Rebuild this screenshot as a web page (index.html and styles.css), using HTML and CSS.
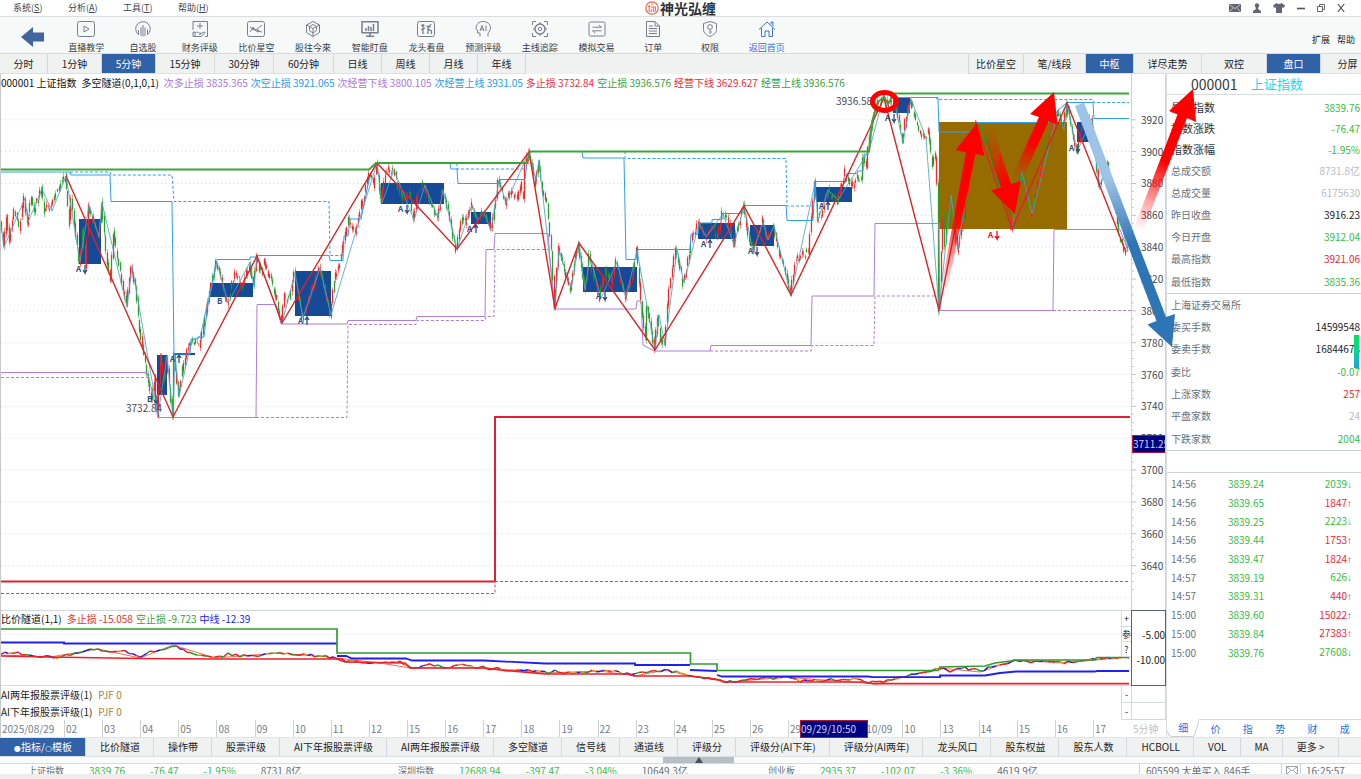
FILE: index.html
```html
<!DOCTYPE html>
<html lang="zh-CN">
<head>
<meta charset="utf-8">
<title>神光弘缠</title>
<link rel="stylesheet" href="styles.css">
</head>
<body>
<div class="app">
  <header class="menubar">
    <nav class="menus">
      <button>系统(<u>S</u>)</button><button>分析(<u>A</u>)</button><button>工具(<u>T</u>)</button><button>帮助(<u>H</u>)</button>
    </nav>
    <div class="brand">
      <svg width="14" height="14" viewBox="0 0 14 14" fill="none" stroke="#f2654e"><circle cx="7" cy="7" r="6.2" stroke-width="1.2"/><path d="M3.2 5.5h2M4.2 4v7M7 2.5v2M6 6h4.500v3l-1 2M6.200 8v3M8.300 6v5"/></svg>
      <h1>神光弘缠</h1>
    </div>
    <div class="window-tools">
      <button aria-label="邮件"><svg width="12" height="8" viewBox="0 0 12 8"><rect width="12" height="8" rx="1" fill="#5f6872"/><path d="M1 1l5 3.6L11 1M1 7l3-2.6M11 7L8 4.4" stroke="#dfe3e7" fill="none" stroke-width=".8"/></svg></button>
      <button aria-label="用户"><svg width="10" height="10" viewBox="0 0 10 10"><circle cx="5" cy="2.4" r="2.2" fill="#5f6872"/><path d="M1 10V8l3-2h2l3 2v2zM3.8 4h2.4v3H3.8z" fill="#5f6872"/></svg></button>
      <button aria-label="皮肤"><svg width="12" height="10" viewBox="0 0 12 10"><path d="M3.5 0Q6 2 8.500 0L12 2.500 10.600 5 9 4.300V10H3V4.300L1.400 5 0 2.500z" fill="#5f6872"/></svg></button>
      <button aria-label="最小化" class="win"><svg width="8" height="10" viewBox="0 0 8 10"><path d="M0 5.500h8" stroke="#555" stroke-width="1.600"/></svg></button>
      <button aria-label="还原" class="win"><svg width="8" height="8" viewBox="0 0 8 8"><path d="M.5 2.500h5v5h-5zM2.500 2.500v-2h5v5h-2" fill="none" stroke="#666"/></svg></button>
      <button aria-label="关闭" class="win"><svg width="8" height="8" viewBox="0 0 8 8"><path d="M.8 0l6.400 8M7.200 0L.8 8" stroke="#555" stroke-width="1.200"/></svg></button>
    </div>
  </header>

  <div class="toolbar">
    <button class="back" aria-label="返回"><svg width="23" height="20" viewBox="0 0 23 20"><path d="M0 10L12 0v5.500h11v9H12V20z" fill="#41659f"/></svg></button>
    <nav class="tools">
      <button><svg viewBox="0 0 18 16"><rect x=".5" y=".5" width="17" height="15" rx="2"/><path d="M7 5l5 3-5 3z"/></svg>直播教学</button>
      <button><svg viewBox="0 0 18 16"><path d="M4.500 13.700A7.300 7.300 0 1 1 13.500 13.700" /><path d="M4.500 13.500V9M7 15V6.500M9 15.500V4M11 15V6.500M13.500 13.500V8.500"/></svg>自选股</button>
      <button><svg viewBox="0 0 18 16"><path d="M2 9V.5h14.500v15H14M9 2v6M6 5h6M2 11v4.500h2V11zM4 12c2-2 3 0 5 0s1 1.500-1 1.500M9 13l4-2c1.500 0 1 1.200 0 2l-3 2.500H4"/></svg>财务评级</button>
      <button><svg viewBox="0 0 18 16"><rect x=".5" y=".5" width="17" height="15" rx="2"/><path d="M3 11l3-4 3 2 6-5M3 6l4 3 3 1 5 1"/><circle cx="6" cy="7.500" r="1"/><circle cx="11" cy="10" r="1"/></svg>比价星空</button>
      <button><svg viewBox="0 0 18 16"><path d="M9 .5l6.500 3.500v7.500L9 15.500l-6.500-4V4zM9 7.500v8M9 7.500L2.500 4M9 7.500L15.500 4M9 3.500l3.500 2v4L9 12 5.500 9.500v-4z"/></svg>股往今來</button>
      <button><svg viewBox="0 0 18 16"><path d="M1 .7h16v11H1zM5 15.300h8M9 12v3" stroke-width="1.500"/><path d="M5 10V7M7.500 10V5M10 10V6M12.500 10V3" stroke-width="1.500"/></svg>智能盯盘</button>
      <button><svg viewBox="0 0 18 16"><rect x=".5" y=".5" width="17" height="15" rx="2"/><path d="M4 4.500h3.500M6 3v10M4 9l4-2M14 3l-3 4.500V13M11 8l3.500 2v3M9.500 5.500h4" stroke-width="1.300"/></svg>龙头看盘</button>
      <button><svg viewBox="0 0 18 16"><path d="M6 15.500V12H3.500V9L2 8C2 3 5 .5 9 .5S16.500 3 16.500 7c0 2.500-2 4-2.500 5.500v3M6 10l2-5.500L10 10M6.800 8.200h2.600M12 4.500V10"/></svg>预测评级</button>
      <button><svg viewBox="0 0 18 16"><path d="M1.500 4V.5H5M13 .5h3.500V4M1.500 12v3.500H5M13 15.500h3.500V12M9 1v2M9 13v2M2 8h2M14 8h2"/><circle cx="9" cy="8" r="5" stroke-width="1.400"/><circle cx="9" cy="8" r="1.700"/></svg>主线追踪</button>
      <button><svg viewBox="0 0 18 16"><rect x="1" y="1" width="16" height="14" rx="1.500"/><path d="M4.500 6.200h9L10.700 4M13.500 9.800h-9L7.300 12"/></svg>模拟交易</button>
      <button><svg viewBox="0 0 18 16"><path d="M2.500.5h8.500l4.500 4.500v10.500h-13zM11 .5V5h4.500M5 5h4M5 7.500h8M5 10h8M5 12.500h8"/></svg>订单</button>
      <button><svg viewBox="0 0 18 16"><path d="M9 .5l6.500 2v6c0 3.500-3 5.500-6.500 7-3.500-1.500-6.500-3.500-6.500-7v-6zM9 8.500V13M9 11h1.800"/><circle cx="9" cy="6" r="2.400"/></svg>权限</button>
      <button class="home"><svg viewBox="0 0 18 16"><path d="M1 8.500L9 1l8 7.500M3.500 7v8.500H7V10h4v5.500h3.500V7M13 3.500V1h2v4.500"/></svg>返回首页</button>
    </nav>
    <div class="tool-links"><button>扩展</button><button>帮助</button></div>
  </div>

  <div class="periods">
    <nav class="tabs spans">
      <button>分时</button><button>1分钟</button><button class="active">5分钟</button><button>15分钟</button><button>30分钟</button><button>60分钟</button><button>日线</button><button>周线</button><button>月线</button><button>年线</button>
    </nav>
    <nav class="tabs modes">
      <button>比价星空</button><button>笔/线段</button><button class="active">中枢</button><button>详尽走势</button><button>双控</button><button class="active">盘口</button><button>分屏</button>
    </nav>
  </div>

  <main class="workspace">
    <div class="legend chart-legend">
      <b>000001 上证指数</b><b>多空隧道(0,1,0,1)</b>
      <span class="purple">次多止损 3835.365</span><span class="sky">次空止损 3921.065</span><span class="purple">次经营下线 3800.105</span><span class="sky">次经营上线 3931.05</span><span class="red">多止损 3732.84</span><span class="green">空止损 3936.576</span><span class="red">经营下线 3629.627</span><span class="green">经营上线 3936.576</span>
    </div>
    <svg class="price" id="price"></svg>
    <div class="axis">
      <svg id="axis"></svg>
      <output class="cursor-price">3711.25</output>
    </div>

    <section class="sub">
      <div class="legend"><b>比价隧道(1,1)</b><span class="red">多止损 -15.058</span><span class="green">空止损 -9.723</span><span class="blue">中线 -12.39</span></div>
      <svg id="tunnel"></svg>
      <div class="sub-buttons"><button>+</button><button>参</button><button>?</button></div>
    </section>
    <div class="sub-axis"><span>-5.00</span><span>-10.00</span></div>

    <section class="rating"><b>AI两年报股票评级(1)</b><span>PJF 0</span><button>-</button></section>
    <div class="rating-axis"></div>
    <section class="rating"><b>AI下年报股票评级(1)</b><span>PJF 0</span><button>-</button></section>
    <div class="rating-axis"></div>

    <div class="dates">
      <span>2025/08/29</span><span>02</span><span>03</span><span>04</span><span>05</span><span>08</span><span>09</span><span>10</span><span>11</span><span>12</span><span>15</span><span>16</span><span>17</span><span>18</span><span>19</span><span>22</span><span>23</span><span>24</span><span>25</span><span>26</span><span class="cursor">29<output>09/29/10:50</output></span><span></span><span>10/09</span><span>10</span><span>13</span><span>14</span><span>15</span><span>16</span><span>17</span>
    </div>
    <div class="period-note">5分钟</div>

    <aside class="quote">
      <h2><span>000001</span>上证指数</h2>
      <table class="major">
        <tr><th>最新指数</th><td class="up">3839.76</td></tr>
        <tr><th>指数涨跌</th><td class="up">-76.47</td></tr>
        <tr><th>指数涨幅</th><td class="up">-1.95%</td></tr>
      </table>
      <table class="daily">
        <tr><th>总成交额</th><td class="mute">8731.8亿</td></tr>
        <tr><th>总成交量</th><td class="mute">6175630</td></tr>
        <tr><th>昨日收盘</th><td>3916.23</td></tr>
        <tr><th>今日开盘</th><td class="up">3912.04</td></tr>
        <tr><th>最高指数</th><td class="down">3921.06</td></tr>
        <tr><th>最低指数</th><td class="up">3835.36</td></tr>
      </table>
      <table class="market">
        <tr><th colspan="2">上海证券交易所</th></tr>
        <tr><th>委买手数</th><td>14599548</td></tr>
        <tr><th>委卖手数</th><td>16844678</td></tr>
        <tr><th>委比</th><td class="up">-0.07</td></tr>
        <tr><th>上涨家数</th><td class="down">257</td></tr>
        <tr><th>平盘家数</th><td class="mute">24</td></tr>
        <tr><th>下跌家数</th><td class="up">2004</td></tr>
      </table>
      <div class="spacer"></div>
      <table class="ticks">
        <tr><th>14:56</th><td>3839.24</td><td class="up">2039<i>↓</i></td></tr>
        <tr><th>14:56</th><td>3839.65</td><td class="down">1847<i>↑</i></td></tr>
        <tr><th>14:56</th><td>3839.25</td><td class="up">2223<i>↓</i></td></tr>
        <tr><th>14:56</th><td>3839.44</td><td class="down">1753<i>↑</i></td></tr>
        <tr><th>14:56</th><td>3839.47</td><td class="down">1824<i>↑</i></td></tr>
        <tr><th>14:57</th><td>3839.19</td><td class="up">626<i>↓</i></td></tr>
        <tr><th>14:57</th><td>3839.31</td><td class="down">440<i>↑</i></td></tr>
        <tr><th>15:00</th><td>3839.60</td><td class="down">15022<i>↑</i></td></tr>
        <tr><th>15:00</th><td>3839.84</td><td class="down">27383<i>↑</i></td></tr>
        <tr><th>15:00</th><td>3839.76</td><td class="up">27608<i>↓</i></td></tr>
      </table>
      <nav class="quote-tabs"><button class="on"><svg viewBox="0 0 34 17" preserveAspectRatio="none"><path d="M0 0h34l-5 15q-.5 1.500-2 1.500H5Q2.500 16.500 2 14z" fill="#fff"/><path d="M0 11l2 4q1 1.500 3 1.500h22q1.500 0 2-1.500L34 .5" fill="none" stroke="#c8d0d3"/></svg>细</button><button>价</button><button>指</button><button>势</button><button>财</button><button>成</button></nav>
      <i class="gauge"></i>
    </aside>

    <svg class="notes" id="notes"></svg>
  </main>

  <nav class="tabs indicators">
    <button class="active"><i>●</i>指标/<i>○</i>模板</button><button>比价隧道</button><button>操作带</button><button>股票评级</button><button>AI下年报股票评级</button><button>AI两年报股票评级</button><button>多空隧道</button><button>信号线</button><button>通道线</button><button>评级分</button><button>评级分(AI下年)</button><button>评级分(AI两年)</button><button>龙头风口</button><button>股东权益</button><button>股东人数</button><button>HCBOLL</button><button>VOL</button><button>MA</button><button>更多 &gt;</button>
  </nav>
  <div class="drawer"><button aria-label="展开"><svg width="8" height="6" viewBox="0 0 8 6"><path d="M4 0l4 6H0z" fill="#44505e"/></svg></button></div>
  <footer class="ticker">
    <div class="index"><span>上证指数</span><em>3839.76</em><em>-76.47</em><em>-1.95%</em><span>8731.8亿</span></div>
    <div class="index"><span>深圳指数</span><em>12688.94</em><em>-397.47</em><em>-3.04%</em><span>10649.3亿</span></div>
    <div class="index"><span>创业板</span><em>2935.37</em><em>-102.07</em><em>-3.36%</em><span>4619.9亿</span></div>
    <div class="status"><span class="deal">605599 大单买入 846手</span><span class="mail"><svg width="12" height="9" viewBox="0 0 12 9"><path d="M.5.5h11v8H.5zM.5.500L6 5l5.500-4.500M.5 8.500l4-4M11.500 8.500l-4-4" fill="none" stroke="#9aa2a8"/></svg></span><time>16:25:57</time></div>
  </footer>
  <div class="edge"></div>
</div>
<script src="chart.js"></script>
</body>
</html>
```

FILE: styles.css
```css
* { box-sizing: border-box; }
body {
  margin: 0;
  font: 10px/1 "Noto Sans CJK SC", sans-serif;
  color: #222;
  background: #fff;
}
button {
  font: inherit;
  color: inherit;
  background: none;
  border: 0;
  margin: 0;
  padding: 0;
  white-space: nowrap;
  cursor: pointer;
}
svg { display: block; }
table { border-collapse: collapse; width: 100%; }
th { font-weight: 400; text-align: left; }

.app {
  display: grid;
  grid-template-columns: minmax(0, 1fr);
  grid-template-rows: 17px 37px 20px minmax(0, 1fr) 20px 7px 10px 5px;
  height: 100vh;
  min-height: 600px;
}

/* menu bar */
.menubar {
  display: grid;
  grid-template-columns: 1fr auto 1fr;
  align-items: center;
  border-bottom: 1px solid #d9dee0;
}
.menus { display: flex; padding-left: 13px; }
.menus button { width: 55px; text-align: left; font-size: 9px; color: #3c444c; line-height: 14px; }
.brand { display: flex; align-items: center; gap: 1px; }
.brand h1 { margin: 0; font-size: 14px; line-height: 16px; font-weight: 700; color: #2c333a; }
.window-tools { display: flex; justify-content: flex-end; align-items: center; gap: 11px; padding-right: 16px; }
.window-tools .win { margin-left: 1px; }

/* toolbar */
.toolbar {
  display: flex;
  align-items: center;
  background: #f7f9f9;
  border-bottom: 1px solid #d5dbdd;
}
.back { width: 58px; padding: 3px 0 0 21px; }
.tools { display: grid; grid-template-columns: repeat(13, 1fr); width: 737px; }
.tools button {
  display: flex;
  flex-direction: column;
  align-items: center;
  gap: 5px;
  padding-top: 4px;
  font-size: 9px;
  line-height: 11px;
  color: #333c46;
}
.tools svg { width: 18px; height: 16px; fill: none; stroke: #76808b; }
.tools .home { color: #2f6fdc; }
.tools .home svg { stroke: #3d74dc; }
.tool-links { display: flex; gap: 7px; margin-left: auto; padding: 8px 6px 0 0; }
.tool-links button { font-size: 9px; line-height: 11px; }

/* tab strips */
.periods { display: flex; justify-content: space-between; background: #f0f2f2; overflow: hidden; }
.tabs { display: flex; background: #f0f2f2; border-bottom: 1px solid #dce1e3; white-space: nowrap; }
.tabs button { flex: none; padding: 0 14px; border-right: 1px solid #d4dadc; }
.tabs button.active { background: #3162a8; color: #fff; }
.spans { display: grid; grid-template-columns: 48px 54px 54px 59px 59px 60px 48px 48px 48px 48px; }
.modes {
  display: grid;
  grid-template-columns: 55px 62px 48px 68px 65px 54px 54px;
  margin-right: -14px;
  border-left: 1px solid #d4dadc;
}
.tabs.modes button, .tabs.spans button { padding: 0; }
.indicators { border-top: 1px solid #e0e5e6; overflow: hidden; }
.indicators button { padding: 0 13px 0 14px; }
.indicators i { font: 8px "DejaVu Sans", sans-serif; }

/* chart area */
.workspace {
  position: relative;
  display: grid;
  grid-template-columns: minmax(0, 1fr) 35px 195px;
  grid-template-rows: 18px minmax(0, 1fr) 76px 17px 17px 17px;
  border-left: 1px solid #c6c9ca;
}
.legend { display: flex; align-items: center; gap: 3px; line-height: 16px; white-space: nowrap; }
.legend b { font-weight: 400; color: #111; margin-right: 2px; }
.purple { color: #ac76d6; }
.sky { color: #259af4; }
.red { color: #ee2b36; }
.green { color: #37a237; }
.blue { color: #2424ee; }
.chart-legend { grid-area: 1 / 1; }
.price { grid-area: 2 / 1; width: 100%; height: 100%; overflow: visible; }
.axis { grid-area: 1 / 2 / 3 / 3; position: relative; overflow: hidden; border-left: 1px solid #cdd4d6; border-right: 1px solid #cdd4d6; }
.axis svg { position: absolute; inset: 0; width: 100%; height: 100%; }
.cursor-price, .dates output {
  position: absolute;
  background: #000082;
  border: 1px solid #b0163a;
  color: #d4d4ee;
  line-height: 16px;
  white-space: nowrap;
}
.cursor-price { left: 0; right: -4px; top: 67.4%; }

.sub { grid-area: 3 / 1; position: relative; display: grid; grid-template-rows: 15px 1fr; border-top: 1px solid #d2d8da; border-bottom: 1px solid #d8dede; }
.sub svg { width: 100%; height: 100%; }
.sub-buttons { position: absolute; right: 0; top: 0; width: 10px; display: grid; grid-template-rows: 16px 15px 15px; }
.sub-buttons button, .rating button { border: 1px solid #d6dbdd; border-width: 0 0 1px 1px; background: #fff; font-size: 9px; }
.sub-axis { grid-area: 3 / 2; border: 1px solid #59616c; display: grid; grid-template-rows: 25px 25px; padding-top: 12px; line-height: 24px; justify-items: end; }
.rating { grid-column: 1; display: flex; align-items: stretch; line-height: 17px; gap: 6px; }
.rating b { font-weight: 400; }
.rating span { color: #aa8432; }
.rating button { width: 10px; margin-left: auto; }
.rating-axis { grid-column: 2; border: 1px solid #d2d8da; border-top: 0; }
.dates { grid-column: 1; display: grid; grid-template-columns: 63px repeat(28, minmax(0, 1fr)); color: #747d85; line-height: 17px; }
.dates span { border-left: 1px solid #ccd3d6; padding-left: 1px; white-space: nowrap; }
.dates span:first-child { border: 0; }
.dates .cursor { position: relative; z-index: 1; }
.dates output { left: 11px; top: 0; width: 68px; }
.period-note { grid-column: 2; color: #b9c0c4; line-height: 17px; padding-left: 2px; }

/* quote panel */
.quote { grid-area: 1 / 3 / 7 / 4; position: relative; display: flex; flex-direction: column; border-left: 1px solid #d8dedf; }
.quote h2 { display: flex; gap: 13px; margin: 0; padding-left: 24px; font-size: 13px; font-weight: 400; line-height: 20px; height: 21px; border-bottom: 1px solid #d8dedf; color: #14dcf6; }
.quote h2 span { font-size: 14px; color: #333a42; }
.quote th { padding: 0 0 0 4px; color: #69727b; }
.quote td { padding: 0 1px 0 0; text-align: right; }
.quote .up { color: #34bd43; }
.quote .down { color: #f0262f; }
.quote .mute { color: #b9bdc1; }
.major { height: 63px; margin-top: 2px; }
.quote .major th { font-size: 11px; color: #2c343c; }
.daily { height: 134px; border-bottom: 1px solid #ccd4d6; }
.market { height: 157px; border-bottom: 1px solid #ccd4d6; }
.spacer { height: 22px; border-bottom: 1px solid #ccd4d6; }
.ticks { height: 187px; margin-top: 2px; }
.quote .ticks td { color: #34bd43; width: 65px; }
.quote .ticks td:nth-child(2) { padding-right: 12px; }
.quote .ticks td:last-child { width: 85px; padding-right: 9px; }
.quote .ticks td.down { color: #f0262f; }
.ticks i { font: 10px/1 "Liberation Sans", sans-serif; }
.quote-tabs { display: grid; grid-template-columns: repeat(6, 1fr); height: 18px; margin-top: auto; color: #2a70e0; border-top: 1px solid #d6dcde; }
.quote-tabs .on { position: relative; z-index: 0; margin-top: -1px; }
.quote-tabs svg { position: absolute; inset: 0; width: 100%; height: 100%; z-index: -1; }
.gauge { position: absolute; right: 2px; top: 261px; width: 5px; height: 33px; background: linear-gradient(#00e564, #08d68e 50%, #209cf0); }

.notes { position: absolute; inset: 0; width: 100%; height: 100%; pointer-events: none; }

/* bottom strips */
.drawer { background: #fafbfb; border-bottom: 1px solid #d5dbdd; display: flex; justify-content: center; }
.drawer button { width: 71px; margin-left: 36px; background: #b7bfc6; display: flex; justify-content: center; }
.ticker { display: flex; overflow: hidden; padding-left: 28px; color: #666e76; line-height: 13px; white-space: nowrap; }
.index { width: 370px; display: flex; gap: 25px; flex: 0 1 370px; }
.index span:first-child { font-size: 9px; }
.ticker em { font-style: normal; color: #34bd43; }
.status { display: flex; margin-left: auto; height: 10px; flex: none; }
.deal { width: 142px; padding-left: 6px; border-left: 1px solid #ccd3d6; }
.mail { width: 20px; padding: 2px 0 0 4px; border: 1px solid #ccd3d6; border-width: 0 1px; }
.status time { width: 60px; padding-left: 5px; }
.edge { background: #ededed; }
```

FILE: chart.js
```js
const NS = 'http://www.w3.org/2000/svg';

// A pane maps design coordinates (x0,y0,w,h) onto the real size of its svg.
function pane(id, x0, y0, w, h) {
  const svg = document.getElementById(id);
  svg.textContent = '';
  const r = svg.getBoundingClientRect();
  const kx = r.width / w, ky = r.height / h;
  const X = x => (x - x0) * kx, Y = y => (y - y0) * ky;
  const add = (tag, attrs, text) => {
    const e = document.createElementNS(NS, tag);
    for (const k in attrs) e.setAttribute(k, attrs[k]);
    if (text) e.textContent = text;
    svg.appendChild(e);
    return e;
  };
  const d = (p, close) => {
    let s = '';
    for (let i = 0; i < p.length; i += 2) s += (i ? 'L' : 'M') + X(p[i]).toFixed(1) + ' ' + Y(p[i + 1]).toFixed(1);
    return s + (close ? 'z' : '');
  };
  const line = (p, stroke, width = 1, dash = '', opacity = 1) =>
    add('path', { d: d(p), fill: 'none', stroke, 'stroke-width': width, 'stroke-dasharray': dash, opacity });
  const shape = (p, fill) => add('path', { d: d(p, true), fill });
  const box = (x, y, w2, h2, fill) => add('rect', { x: X(x), y: Y(y), width: w2 * kx, height: h2 * ky, fill });
  const text = (x, y, s, fill, size = 10, weight = 400) =>
    add('text', { x: X(x), y: Y(y), fill, 'font-size': size, 'font-weight': weight }, s);
  return { svg, X, Y, add, line, shape, box, text };
}

function random(seed) {
  return () => (seed = (seed * 16807) % 2147483647) / 2147483647;
}

const swings = [1,225,4,247,7,214,10,243,15,210,20,228,25,198,28,222,32,196,35,210,42,189,45,212,52,205,57,192,66,176,70,222,72,200,80,262,83,228,86,266,89,205,99,237,102,203,107,250,111,282,114,230,118,258,127,305,132,266,136,285,139,317,146,365,152,400,155,378,158,415,161,355,165,380,167,356,173,417,175,355,179,396,183,370,188,350,192,340,200,347,207,310,212,285,217,262,228,303,236,274,243,288,250,262,254,287,257,256,262,273,265,262,275,290,282,323,285,296,290,300,295,273,303,318,320,268,331,315,335,280,342,255,349,220,356,231,362,205,370,172,374,185,377,163,382,203,386,173,394,170,399,185,404,200,410,195,414,220,419,190,425,185,432,205,438,218,443,190,446,199,457,249,463,215,466,222,472,205,478,220,484,212,490,225,492,230,497,200,499,180,506,203,512,190,518,199,521,183,524,198,526,165,529,152,533,167,536,181,539,160,543,190,548,205,552,250,555,308,559,250,565,270,571,288,575,260,579,243,585,290,590,256,594,275,600,298,606,268,612,285,617,262,626,298,633,275,637,250,642,300,646,340,648,305,655,350,658,315,661,338,665,343,670,290,676,250,684,283,693,235,699,223,706,237,712,225,718,238,723,214,728,218,734,245,744,206,749,235,753,250,763,222,768,240,774,226,780,255,785,265,791,295,796,262,803,255,809,252,815,183,818,220,822,215,828,190,838,200,846,173,852,188,858,178,862,178,864,155,867,170,869,151,873,120,877,105,884,98,888,105,893,98,897,110,903,142,907,115,911,99,915,115,921,133,926,138,929,132,933,165,936,155,938,180,939,310,944,215,946,245,951,195,958,250,965,215,970,175,976,123,984,135,990,150,998,185,1001,160,1007,200,1012,229,1017,195,1022,172,1032,214,1040,180,1048,150,1058,110,1064,130,1067,103,1073,135,1077,152,1084,120,1092,118,1096,155,1099,187,1108,165,1115,200,1120,235,1125,252,1128,245];

const strokes = [1,225,4,247,25,198,28,222,42,189,52,211,66,176,80,262,89,205,99,237,102,203,127,307,132,266,158,415,167,356,173,417,175,355,179,396,192,340,200,337,217,262,228,303,250,262,254,287,257,256,282,323,295,273,303,318,320,268,331,315,356,231,377,163,382,203,394,170,414,220,425,185,438,218,443,190,457,249,472,205,478,220,484,212,491,231,499,180,506,203,529,152,536,181,539,160,555,308,559,250,571,288,579,243,585,290,590,256,601,298,617,262,626,298,637,250,655,350,659,315,665,345,677,250,684,283,699,223,706,237,723,214,734,245,744,206,753,252,763,222,768,240,774,226,791,295,815,183,818,220,828,190,838,200,869,151,884,95,888,105,893,96,903,142,911,99,926,138,939,310,951,195,958,250,976,123,1012,229,1022,172,1032,214,1058,110,1064,130,1067,103,1077,152,1092,118,1099,187,1108,165,1128,252];

function drawPrice() {
  const c = pane('price', 1, 92, 1130, 518);
  for (let y = 119.8; y < 600; y += 31.84) c.line([1, y, 1131, y], '#dadada', 1, '1 3');

  const boxes = [[79,219,22,45],[157,355,10,40],[210,283,43,14],[295,271,36,45],[381,183,63,21],[471,212,20,12],[583,267,54,25],[698,223,37,16],[750,225,24,21],[816,187,36,15],[893,97,17,16],[1077,122,13,20]];
  boxes.forEach(b => c.box(...b, '#154a98'));
  c.box(939, 122, 128, 107, '#966c00');
  c.line([174,354,195,354], '#154a98', 2);

  const rnd = random(77);
  for (let i = 0; i + 3 < swings.length; i += 2) {
    const [x1, y1, x2, y2] = swings.slice(i, i + 4);
    const n = Math.max(1, Math.round((x2 - x1) / 1.5));
    const step = (y2 - y1) / n;
    for (let k = 0; k < n; k++) {
      const x = Math.round(x1 + (x2 - x1) * k / n) + .5;
      const wob = (rnd() - .5) * 6;
      const a = y1 + step * k + wob, b = a + step + (rnd() - .5) * 5;
      const rising = rnd() < .72 ? step < 0 : step >= 0;
      const wick = 1 + rnd() * 3;
      c.line([x, Math.min(a, b) - wick, x, Math.max(a, b) + wick], rising ? '#ff1a1a' : '#1fa01f', 1, '', .5);
      c.line([x, Math.min(a, b), x, Math.max(a, b)], rising ? '#ee2020' : '#1f9a1f', 1.3, '', .9);
    }
  }
  c.line(strokes, '#4aa7c6', 1, '', .85);

  const sky = '#2f9ff0', purple = '#ad7fda';
  [[1,172,70,172,71,175,110,175,111,201.5,172,201.5,174,354,190,354,191,339,198,339,198,337,204,337,207,310,212,285,217,259.5,250,259.5,250,257,257,257,258,255.5,329,255.5,330,260.5,343,260.5,344,236,348,236,350,219,361,219,370,175,377,163],
   [450,163,451,169,457,169,458,183.5,499,183.5,500,179.5,525,179.5,527,163],
   [582,151.5,583,158,624,158,626,259.5,636,259.5,638,249.5,690,249.5,691,234,698,234,699,223,712,223,712,219.5,722,219.5,722,213.5,740,213.5,744,205.5,786,205.5,787,220.5,813,220.5,815,181.5,846,181.5,847,173.5,857,173.5,858,171,863,171,864,154,869,154],
   [893,94,894,97.5,938,97.5,939,132,975,132,976,122.5,1049,122.5,1058,110,1067,102.5,1093,102.5,1094,118.5,1129,118.5]
  ].forEach(p => c.line(p, sky));
  [[70,172,110,172,111,175,172,175,174,201.5,329,201.5,330,255.5,343,255.5],[457,163,457,169,525,169],[625,151,625,158.5,786,158.5,787,206,814,206],[936,97,937,99.5,1093,99.5,1094,102.5,1129,102.5]].forEach(p => c.line(p, sky, 1, '3 2'));
  [[1,372.5,147,372.5,152,390,158,417.5,256,417.5,257,304.5,276,304.5,281,324,347,324,348,320.5,416,320.5,417,316.5,485,316.5,486,249.5,494,249.5,495,233.5,548,233.5,554,309,636,309,637,301,641,301,643,345,654,351,710,351,711,345.5,811,345.5,812,296,874,296,875,223.5,939,223.5,940,310.5,1053,310.5,1054,229.5,1120,229.5,1128,250]].forEach(p => c.line(p, purple));
  [[1,377.5,148,377.5],[256,417.5,347,417.5,348,324.5,416,324.5,417,320.5,485,320.5,486,316.5,494,316.5,495,249.5,548,249.5],[710,351,811,351,812,345.5,874,345.5,875,296,938,296],[1053,310.5,1131,310.5]].forEach(p => c.line(p, purple, 1, '3 2'));

  c.line([66,176,173,417,257,256,282,323,377,163,457,249,529,152,555,308,579,243,655,350,744,206,791,295,884,98,939,310,976,123,1012,229,1067,103,1126,252], '#dc2424', 1.4);
  c.line([1,169.5,369,169.5,376,163,527,163,530,151.5,869,151.5,872,122,878,102,884,97,888,104,894,93.5,1129,93.5], '#3aa63a', 2);
  c.line([1,581.5,495,581.5,495,417,1130,417], '#e02030', 2);
  c.line([495,581.5,1130,581.5], '#e84450', 1, '3 2');
  c.line([1,593.5,495,593.5,495,581], '#e84450', 1, '3 2');

  [[76,272,'A','d'],[147,402,'B','d'],[170,362,'A','u'],[217,304,'B',''],[298,324,'A','u'],[398,212,'A','d'],[467,232,'A','u'],[596,299,'A','d'],[701,247,'A','u'],[748,254,'A','d'],[819,209,'A','u'],[885,121,'A','d'],[1069,151,'A','d'],[988,238,'A','d','#f00']].forEach(([x, y, s, dir, col = '#2c4c80']) => {
    c.text(x, y, s, col, 8, 700);
    const u = dir === 'u' ? -1 : 1, m = y - 3;
    if (dir) c.line([x+9,m-4*u, x+9,m+4*u, x+7,m+1*u, x+9,m+4*u, x+11,m+1*u], col, 1.3);
  });
  c.text(126, 412, '3732.84', '#454d55');
  c.text(836, 105, '3936.58', '#454d55');
}

function drawAxis() {
  const c = pane('axis', 1132, 74, 33, 536);
  for (let i = 0; i < 15; i++) {
    const y = 119.8 + i * 31.84;
    c.line([1132, y, 1136, y], '#b9c2c6');
    for (let k = 1; k < 4; k++) c.line([1132, y + k * 7.96, 1134, y + k * 7.96], '#c6cdd0');
    c.text(1141, y + 4, String(3920 - i * 20), '#3f474f');
  }
}

function drawTunnel() {
  const c = pane('tunnel', 1, 626, 1130, 59);
  [634.5, 659.5].forEach(y => c.line([1, y, 1131, y], '#dadada', 1, '1 3'));
  const wave = [1,654,15,653,25,654,50,657,62,657,75,653,90,650,98,649,110,653,125,652,140,657,150,652,160,650,173,645,180,648,190,653,205,655,215,658,228,654,240,656,262,655,280,653,300,654,315,656,337,658,350,662,370,663,400,662,412,667,430,665,447,667,458,664,475,667,500,669,520,670,545,673,555,671,565,673,600,671,615,672,635,675,650,671,665,670,680,673,700,677,720,680,730,682,750,680,785,677,800,681,850,679,876,683,895,679,915,674,940,668,950,671,965,668,980,671,1000,665,1015,660,1035,662,1060,663,1080,661,1100,658,1115,659,1129,657];
  c.line([1,655,50,657,98,649,140,658,173,645,215,658,280,653,337,658,380,663,410,668,485,668,545,673,600,671,635,676,665,670,690,676,730,682,785,677,876,684,940,668,980,672,1015,660,1060,663,1129,657], '#ff6a5a');
  const rnd = random(31), cols = ['#e02020', '#2020d0', '#209a20', '#e08a20', '#e02020'];
  let px = wave[0], py = wave[1];
  for (let i = 2; i < wave.length; i += 2) {
    const n = Math.max(1, Math.round((wave[i] - wave[i - 2]) / 4));
    for (let k = 1; k <= n; k++) {
      const x = wave[i - 2] + (wave[i] - wave[i - 2]) * k / n;
      const y = wave[i - 1] + (wave[i + 1] - wave[i - 1]) * k / n + (rnd() - .5) * 3;
      c.line([px, py, x, y], cols[Math.floor(rnd() * 5)], 1.5);
      px = x; py = y;
    }
  }
  c.line([1,656,50,657,140,658.5,220,659,337,659,345,662,405,663,410,668,485,668,500,670,545,674,630,674,634,676,690,676,715,679,725,682,865,682,873,683.7,1129,683.7], '#ee2028', 1.7);
  [[1,642.5,64,642.5,64,643.5,337,643.5],[337,656,346,656,352,658.5,406,658.5,412,660.5,484,660.5,545,663.5,635,663.5,635,665,690,665],[690,670,717,671],[717,675,722,676.5,868,676.5,873,677.2,940,677.2,940,675.5,985,675.5,1000,673,1016,671.5,1095,671.5,1097,671,1129,671]].forEach(p => c.line(p, '#2020f0', 1.8));
  c.line([1,629,337,629,337,653,690.5,653,690.5,664,717,664,717,670.5,938,670.5,940,667,985,666,995,663,1010,661,1015,660,1094,660,1097,657.5,1129,657.5], '#2f9e2f', 1.7);
}

function drawNotes() {
  const c = pane('notes', 1, 74, 1360, 663);
  const defs = c.add('defs', {});
  const gradient = (id, x1, y1, x2, y2, stops) => {
    const g = document.createElementNS(NS, 'linearGradient');
    const a = { id, gradientUnits: 'userSpaceOnUse', x1: c.X(x1), y1: c.Y(y1), x2: c.X(x2), y2: c.Y(y2) };
    for (const k in a) g.setAttribute(k, a[k]);
    stops.forEach(([o, col, op]) => {
      const s = document.createElementNS(NS, 'stop');
      s.setAttribute('offset', o); s.setAttribute('stop-color', col); s.setAttribute('stop-opacity', op);
      g.appendChild(s);
    });
    defs.appendChild(g);
  };
  const fade = [[0, '#f00', 0], [.25, '#f00', .35], [.6, '#f00', 1], [1, '#f00', 1]];
  const lateFade = [[0, '#f00', 0], [.45, '#f00', .35], [.9, '#f00', 1], [1, '#f00', 1]];
  gradient('g1', 943, 295, 972, 150, fade);
  c.shape([940,293,966,152.5,955.5,150,977,123,984.5,156,975.5,154,946,295], 'url(#g1)');
  gradient('g2', 986, 127, 1007, 189, lateFade);
  c.shape([981,129,1001,187.5,991,190.5,1015,214,1021,181,1011,184,992,125], 'url(#g2)');
  gradient('g3', 1017, 180, 1044, 119, fade);
  c.shape([1012,177,1039,117,1030,114,1054,92,1057.5,124.5,1048.5,121.5,1021,182], 'url(#g3)');
  gradient('g4', 1138, 230, 1182, 116, fade);
  c.shape([1134,228,1177.5,114.5,1169,111,1193,89,1196,122,1187,118,1143,231], 'url(#g4)');
  gradient('g5', 1080, 104, 1161, 319, [[0, '#9dc3e6', 1], [.35, '#9dc3e6', 1], [.65, '#2e75b6', 1], [1, '#2e75b6', 1]]);
  c.shape([1075,106,1156.5,321,1147.5,324.5,1172,347,1175,314,1166,317,1084,102.5], 'url(#g5)');
  c.add('ellipse', { cx: c.X(884.5), cy: c.Y(101.5), rx: 12, ry: 9, fill: 'none', stroke: '#f00', 'stroke-width': 5 });
}

function draw() { drawPrice(); drawAxis(); drawTunnel(); drawNotes(); }
draw();
addEventListener('resize', draw);
```
